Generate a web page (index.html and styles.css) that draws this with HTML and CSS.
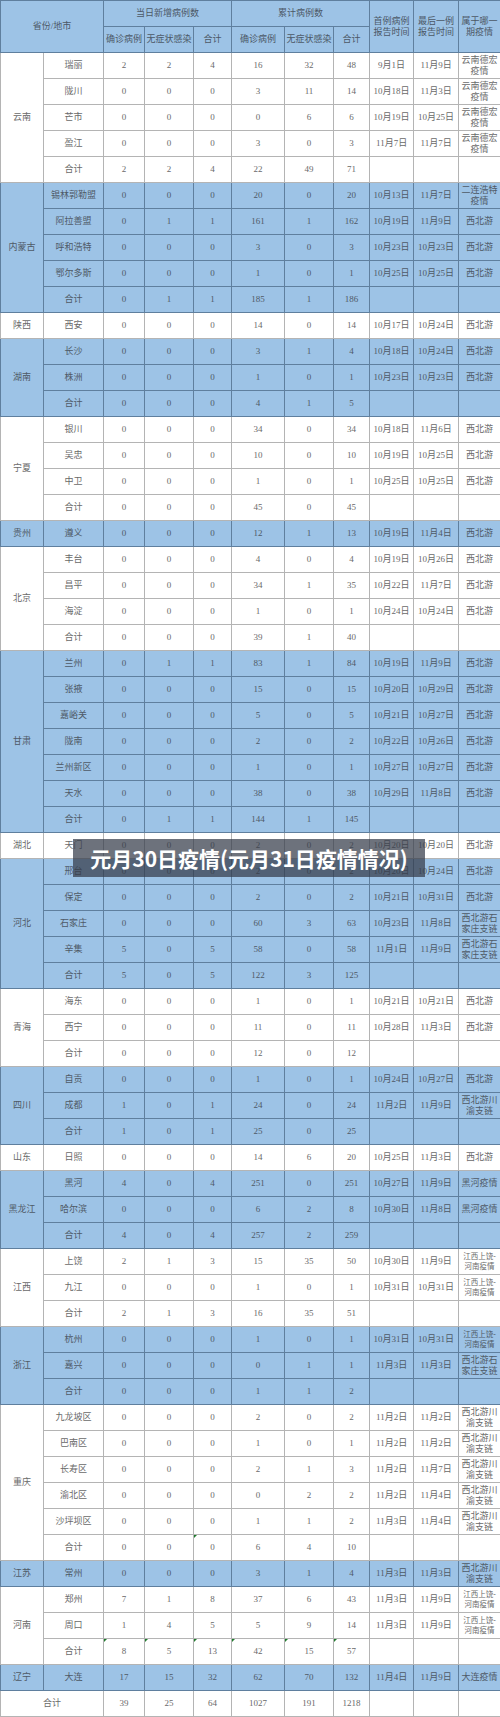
FILE: index.html
```html
<!DOCTYPE html>
<html lang="zh-CN">
<head>
<meta charset="utf-8">
<title>元月30日疫情</title>
<link rel="stylesheet" href="styles.css">
</head>
<body>
<div class="sheet">
<table class="grid">
<colgroup>
<col class="c-prov"><col class="c-city"><col class="c-n1"><col class="c-n2"><col class="c-n3"><col class="c-n4"><col class="c-n5"><col class="c-n6"><col class="c-d1"><col class="c-d2"><col class="c-tag">
</colgroup>
<thead class="blue">
<tr><th colspan="2" rowspan="2">省份/地市</th><th colspan="3">当日新增病例数</th><th colspan="3">累计病例数</th><th rowspan="2" class="two">首例病例<br>报告时间</th><th rowspan="2" class="two">最后一例<br>报告时间</th><th rowspan="2" class="two">属于哪一<br>期疫情</th></tr>
<tr><th>确诊病例</th><th>无症状感染</th><th>合计</th><th>确诊病例</th><th>无症状感染</th><th>合计</th></tr>
</thead>
<tbody class="white">
<tr><td rowspan="5">云南</td><td>瑞丽</td><td>2</td><td>2</td><td>4</td><td>16</td><td>32</td><td>48</td><td>9月1日</td><td>11月9日</td><td class="two">云南德宏<br>疫情</td></tr>
<tr><td>陇川</td><td>0</td><td>0</td><td>0</td><td>3</td><td>11</td><td>14</td><td>10月18日</td><td>11月3日</td><td class="two">云南德宏<br>疫情</td></tr>
<tr><td>芒市</td><td>0</td><td>0</td><td>0</td><td>0</td><td>6</td><td>6</td><td>10月19日</td><td>10月25日</td><td class="two">云南德宏<br>疫情</td></tr>
<tr><td>盈江</td><td>0</td><td>0</td><td>0</td><td>3</td><td>0</td><td>3</td><td>11月7日</td><td>11月7日</td><td class="two">云南德宏<br>疫情</td></tr>
<tr><td>合计</td><td>2</td><td>2</td><td>4</td><td>22</td><td>49</td><td>71</td><td></td><td></td><td></td></tr>
</tbody>
<tbody class="blue">
<tr><td rowspan="5">内蒙古</td><td>锡林郭勒盟</td><td>0</td><td>0</td><td>0</td><td>20</td><td>0</td><td>20</td><td>10月13日</td><td>11月7日</td><td class="two">二连浩特<br>疫情</td></tr>
<tr><td>阿拉善盟</td><td>0</td><td>1</td><td>1</td><td>161</td><td>1</td><td>162</td><td>10月19日</td><td>11月9日</td><td>西北游</td></tr>
<tr><td>呼和浩特</td><td>0</td><td>0</td><td>0</td><td>3</td><td>0</td><td>3</td><td>10月23日</td><td>10月23日</td><td>西北游</td></tr>
<tr><td>鄂尔多斯</td><td>0</td><td>0</td><td>0</td><td>1</td><td>0</td><td>1</td><td>10月25日</td><td>10月25日</td><td>西北游</td></tr>
<tr><td>合计</td><td>0</td><td>1</td><td>1</td><td>185</td><td>1</td><td>186</td><td></td><td></td><td></td></tr>
</tbody>
<tbody class="white">
<tr><td>陕西</td><td>西安</td><td>0</td><td>0</td><td>0</td><td>14</td><td>0</td><td>14</td><td>10月17日</td><td>10月24日</td><td>西北游</td></tr>
</tbody>
<tbody class="blue">
<tr><td rowspan="3">湖南</td><td>长沙</td><td>0</td><td>0</td><td>0</td><td>3</td><td>1</td><td>4</td><td>10月18日</td><td>10月24日</td><td>西北游</td></tr>
<tr><td>株洲</td><td>0</td><td>0</td><td>0</td><td>1</td><td>0</td><td>1</td><td>10月23日</td><td>10月23日</td><td>西北游</td></tr>
<tr><td>合计</td><td>0</td><td>0</td><td>0</td><td>4</td><td>1</td><td>5</td><td></td><td></td><td></td></tr>
</tbody>
<tbody class="white">
<tr><td rowspan="4">宁夏</td><td>银川</td><td>0</td><td>0</td><td>0</td><td>34</td><td>0</td><td>34</td><td>10月18日</td><td>11月6日</td><td>西北游</td></tr>
<tr><td>吴忠</td><td>0</td><td>0</td><td>0</td><td>10</td><td>0</td><td>10</td><td>10月19日</td><td>10月25日</td><td>西北游</td></tr>
<tr><td>中卫</td><td>0</td><td>0</td><td>0</td><td>1</td><td>0</td><td>1</td><td>10月25日</td><td>10月25日</td><td>西北游</td></tr>
<tr><td>合计</td><td>0</td><td>0</td><td>0</td><td>45</td><td>0</td><td>45</td><td></td><td></td><td></td></tr>
</tbody>
<tbody class="blue">
<tr><td>贵州</td><td>遵义</td><td>0</td><td>0</td><td>0</td><td>12</td><td>1</td><td>13</td><td>10月19日</td><td>11月4日</td><td>西北游</td></tr>
</tbody>
<tbody class="white">
<tr><td rowspan="4">北京</td><td>丰台</td><td>0</td><td>0</td><td>0</td><td>4</td><td>0</td><td>4</td><td>10月19日</td><td>10月26日</td><td>西北游</td></tr>
<tr><td>昌平</td><td>0</td><td>0</td><td>0</td><td>34</td><td>1</td><td>35</td><td>10月22日</td><td>11月7日</td><td>西北游</td></tr>
<tr><td>海淀</td><td>0</td><td>0</td><td>0</td><td>1</td><td>0</td><td>1</td><td>10月24日</td><td>10月24日</td><td>西北游</td></tr>
<tr><td>合计</td><td>0</td><td>0</td><td>0</td><td>39</td><td>1</td><td>40</td><td></td><td></td><td></td></tr>
</tbody>
<tbody class="blue">
<tr><td rowspan="7">甘肃</td><td>兰州</td><td>0</td><td>1</td><td>1</td><td>83</td><td>1</td><td>84</td><td>10月19日</td><td>11月9日</td><td>西北游</td></tr>
<tr><td>张掖</td><td>0</td><td>0</td><td>0</td><td>15</td><td>0</td><td>15</td><td>10月20日</td><td>10月29日</td><td>西北游</td></tr>
<tr><td>嘉峪关</td><td>0</td><td>0</td><td>0</td><td>5</td><td>0</td><td>5</td><td>10月21日</td><td>10月27日</td><td>西北游</td></tr>
<tr><td>陇南</td><td>0</td><td>0</td><td>0</td><td>2</td><td>0</td><td>2</td><td>10月22日</td><td>10月26日</td><td>西北游</td></tr>
<tr><td>兰州新区</td><td>0</td><td>0</td><td>0</td><td>1</td><td>0</td><td>1</td><td>10月27日</td><td>10月27日</td><td>西北游</td></tr>
<tr><td>天水</td><td>0</td><td>0</td><td>0</td><td>38</td><td>0</td><td>38</td><td>10月29日</td><td>11月8日</td><td>西北游</td></tr>
<tr><td>合计</td><td>0</td><td>1</td><td>1</td><td>144</td><td>1</td><td>145</td><td></td><td></td><td></td></tr>
</tbody>
<tbody class="white">
<tr><td>湖北</td><td>天门</td><td>0</td><td>0</td><td>0</td><td>2</td><td>0</td><td>2</td><td>10月20日</td><td>10月20日</td><td>西北游</td></tr>
</tbody>
<tbody class="blue">
<tr><td rowspan="5">河北</td><td>邢台</td><td>0</td><td>0</td><td>0</td><td>2</td><td>0</td><td>2</td><td>10月20日</td><td>10月24日</td><td>西北游</td></tr>
<tr><td>保定</td><td>0</td><td>0</td><td>0</td><td>2</td><td>0</td><td>2</td><td>10月21日</td><td>10月31日</td><td>西北游</td></tr>
<tr><td>石家庄</td><td>0</td><td>0</td><td>0</td><td>60</td><td>3</td><td>63</td><td>10月23日</td><td>11月8日</td><td class="two">西北游石<br>家庄支链</td></tr>
<tr><td>辛集</td><td>5</td><td>0</td><td>5</td><td>58</td><td>0</td><td>58</td><td>11月1日</td><td>11月9日</td><td class="two">西北游石<br>家庄支链</td></tr>
<tr><td>合计</td><td>5</td><td>0</td><td>5</td><td>122</td><td>3</td><td>125</td><td></td><td></td><td></td></tr>
</tbody>
<tbody class="white">
<tr><td rowspan="3">青海</td><td>海东</td><td>0</td><td>0</td><td>0</td><td>1</td><td>0</td><td>1</td><td>10月21日</td><td>10月21日</td><td>西北游</td></tr>
<tr><td>西宁</td><td>0</td><td>0</td><td>0</td><td>11</td><td>0</td><td>11</td><td>10月28日</td><td>11月3日</td><td>西北游</td></tr>
<tr><td>合计</td><td>0</td><td>0</td><td>0</td><td>12</td><td>0</td><td>12</td><td></td><td></td><td></td></tr>
</tbody>
<tbody class="blue">
<tr><td rowspan="3">四川</td><td>自贡</td><td>0</td><td>0</td><td>0</td><td>1</td><td>0</td><td>1</td><td>10月24日</td><td>10月27日</td><td>西北游</td></tr>
<tr><td>成都</td><td>1</td><td>0</td><td>1</td><td>24</td><td>0</td><td>24</td><td>11月2日</td><td>11月9日</td><td class="two">西北游川<br>渝支链</td></tr>
<tr><td>合计</td><td>1</td><td>0</td><td>1</td><td>25</td><td>0</td><td>25</td><td></td><td></td><td></td></tr>
</tbody>
<tbody class="white">
<tr><td>山东</td><td>日照</td><td>0</td><td>0</td><td>0</td><td>14</td><td>6</td><td>20</td><td>10月25日</td><td>11月3日</td><td>西北游</td></tr>
</tbody>
<tbody class="blue">
<tr><td rowspan="3">黑龙江</td><td>黑河</td><td>4</td><td>0</td><td>4</td><td>251</td><td>0</td><td>251</td><td>10月27日</td><td>11月9日</td><td>黑河疫情</td></tr>
<tr><td>哈尔滨</td><td>0</td><td>0</td><td>0</td><td>6</td><td>2</td><td>8</td><td>10月30日</td><td>11月8日</td><td>黑河疫情</td></tr>
<tr><td>合计</td><td>4</td><td>0</td><td>4</td><td>257</td><td>2</td><td>259</td><td></td><td></td><td></td></tr>
</tbody>
<tbody class="white">
<tr><td rowspan="3">江西</td><td>上饶</td><td>2</td><td>1</td><td>3</td><td>15</td><td>35</td><td>50</td><td>10月30日</td><td>11月9日</td><td class="small">江西上饶-<br>河南疫情</td></tr>
<tr><td>九江</td><td>0</td><td>0</td><td>0</td><td>1</td><td>0</td><td>1</td><td>10月31日</td><td>10月31日</td><td class="small">江西上饶-<br>河南疫情</td></tr>
<tr><td>合计</td><td>2</td><td>1</td><td>3</td><td>16</td><td>35</td><td>51</td><td></td><td></td><td></td></tr>
</tbody>
<tbody class="blue">
<tr><td rowspan="3">浙江</td><td>杭州</td><td>0</td><td>0</td><td>0</td><td>1</td><td>0</td><td>1</td><td>10月31日</td><td>10月31日</td><td class="small">江西上饶-<br>河南疫情</td></tr>
<tr><td>嘉兴</td><td>0</td><td>0</td><td>0</td><td>0</td><td>1</td><td>1</td><td>11月3日</td><td>11月3日</td><td class="two">西北游石<br>家庄支链</td></tr>
<tr><td>合计</td><td>0</td><td>0</td><td>0</td><td>1</td><td>1</td><td>2</td><td></td><td></td><td></td></tr>
</tbody>
<tbody class="white">
<tr><td rowspan="6">重庆</td><td>九龙坡区</td><td>0</td><td>0</td><td>0</td><td>2</td><td>0</td><td>2</td><td>11月2日</td><td>11月2日</td><td class="two">西北游川<br>渝支链</td></tr>
<tr><td>巴南区</td><td>0</td><td>0</td><td>0</td><td>1</td><td>0</td><td>1</td><td>11月2日</td><td>11月2日</td><td class="two">西北游川<br>渝支链</td></tr>
<tr><td>长寿区</td><td>0</td><td>0</td><td>0</td><td>2</td><td>1</td><td>3</td><td>11月2日</td><td>11月7日</td><td class="two">西北游川<br>渝支链</td></tr>
<tr><td>渝北区</td><td>0</td><td>0</td><td>0</td><td>0</td><td>2</td><td>2</td><td>11月2日</td><td>11月4日</td><td class="two">西北游川<br>渝支链</td></tr>
<tr><td>沙坪坝区</td><td>0</td><td>0</td><td>0</td><td>1</td><td>1</td><td>2</td><td>11月3日</td><td>11月4日</td><td class="two">西北游川<br>渝支链</td></tr>
<tr><td>合计</td><td>0</td><td>0</td><td class="warn">0</td><td>6</td><td>4</td><td>10</td><td></td><td></td><td></td></tr>
</tbody>
<tbody class="blue">
<tr><td>江苏</td><td>常州</td><td>0</td><td>0</td><td>0</td><td>3</td><td>1</td><td>4</td><td>11月3日</td><td>11月3日</td><td class="two">西北游川<br>渝支链</td></tr>
</tbody>
<tbody class="white">
<tr><td rowspan="3">河南</td><td>郑州</td><td>7</td><td>1</td><td>8</td><td>37</td><td>6</td><td>43</td><td>11月3日</td><td>11月9日</td><td class="small">江西上饶-<br>河南疫情</td></tr>
<tr><td>周口</td><td>1</td><td>4</td><td>5</td><td>5</td><td>9</td><td>14</td><td>11月3日</td><td>11月9日</td><td class="small">江西上饶-<br>河南疫情</td></tr>
<tr><td>合计</td><td class="warn">8</td><td class="warn">5</td><td class="warn">13</td><td class="warn">42</td><td class="warn">15</td><td class="warn">57</td><td></td><td></td><td></td></tr>
</tbody>
<tbody class="blue">
<tr><td>辽宁</td><td>大连</td><td>17</td><td>15</td><td>32</td><td>62</td><td>70</td><td>132</td><td>11月4日</td><td>11月9日</td><td>大连疫情</td></tr>
</tbody>
<tbody class="white">
<tr><td colspan="2">合计</td><td>39</td><td>25</td><td>64</td><td>1027</td><td>191</td><td>1218</td><td></td><td></td><td></td></tr>
</tbody>
</table>
<div class="caption">元月30日疫情(元月31日疫情情况)</div>
</div>
</body>
</html>
```

FILE: styles.css
```css
html, body {
  margin: 0;
  padding: 0;
  background: #ffffff;
}

body {
  font-family: "Liberation Serif", "Noto Sans CJK SC", serif;
}

.sheet {
  position: relative;
  width: 500px;
}

.grid {
  width: 500px;
  border-collapse: collapse;
  table-layout: fixed;
  font-size: 9px;
}

.c-prov { width: 43px; }
.c-city { width: 60px; }
.c-n1 { width: 41px; }
.c-n2 { width: 49px; }
.c-n3 { width: 38px; }
.c-n4 { width: 53px; }
.c-n5 { width: 49px; }
.c-n6 { width: 36px; }
.c-d1 { width: 44px; }
.c-d2 { width: 45px; }
.c-tag { width: 42px; }

.grid tr {
  height: 26px;
}

.grid td,
.grid th {
  padding: 0;
  text-align: center;
  vertical-align: middle;
  font-weight: normal;
  line-height: 11px;
  white-space: nowrap;
  overflow: hidden;
}

.white td {
  background: #ffffff;
  color: #6a6a6a;
  border: 1px solid #b4b4b4;
}

.blue td,
.blue th {
  background: #9dc3e6;
  color: #4f5a66;
  border: 1px solid #5f7f9e;
}

.blue th {
  color: #4c5866;
}

.grid .two {
  line-height: 10.5px;
}

.grid .small {
  font-size: 7.5px;
  line-height: 10px;
}

.grid td.warn {
  position: relative;
}

.grid td.warn::before {
  content: "";
  position: absolute;
  left: 0;
  top: 0;
  border-top: 3px solid #1f7a2c;
  border-right: 3px solid transparent;
}

.caption {
  position: absolute;
  left: 73px;
  top: 839px;
  width: 352px;
  height: 38px;
  background: rgba(52, 60, 74, 0.72);
  color: #ffffff;
  font-family: "Noto Sans CJK SC", "Noto Sans", sans-serif;
  font-weight: bold;
  font-size: 21px;
  line-height: 38px;
  text-align: center;
  white-space: nowrap;
}
```
